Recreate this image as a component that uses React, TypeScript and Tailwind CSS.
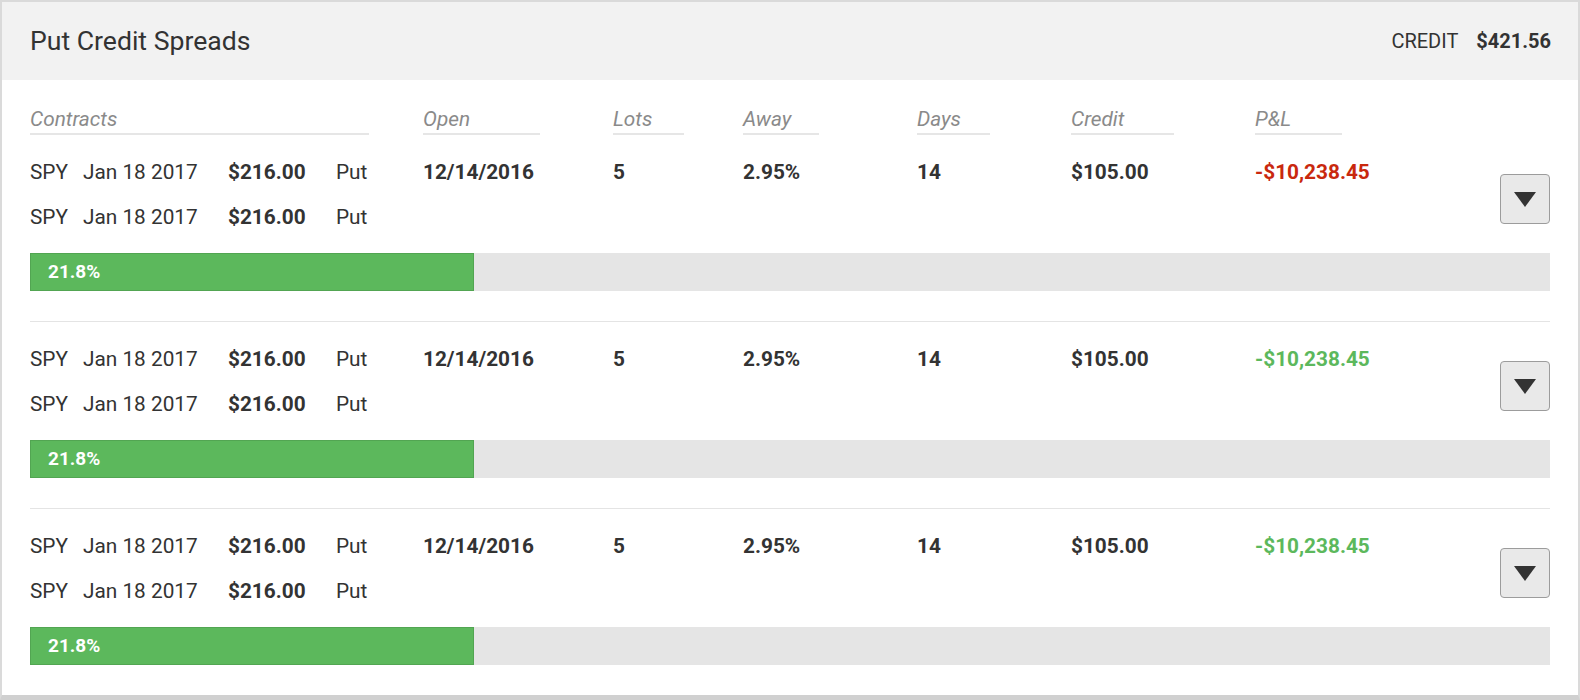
import React from "react";

type Spread = {
  symbol: string;
  expiry: string;
  strike: string;
  type: string;
  open: string;
  lots: string;
  away: string;
  days: string;
  credit: string;
  pnl: string;
  loss: boolean;
  progress: string;
  fill: number;
};

const spreads: Spread[] = [
  { symbol: "SPY", expiry: "Jan 18 2017", strike: "$216.00", type: "Put", open: "12/14/2016", lots: "5", away: "2.95%", days: "14", credit: "$105.00", pnl: "-$10,238.45", loss: true, progress: "21.8%", fill: 29.2 },
  { symbol: "SPY", expiry: "Jan 18 2017", strike: "$216.00", type: "Put", open: "12/14/2016", lots: "5", away: "2.95%", days: "14", credit: "$105.00", pnl: "-$10,238.45", loss: false, progress: "21.8%", fill: 29.2 },
  { symbol: "SPY", expiry: "Jan 18 2017", strike: "$216.00", type: "Put", open: "12/14/2016", lots: "5", away: "2.95%", days: "14", credit: "$105.00", pnl: "-$10,238.45", loss: false, progress: "21.8%", fill: 29.2 },
];

// column header labels with the width of their underline
const columns = [
  { label: "Contracts", line: "w-[339px]" },
  { label: "Open", line: "w-[117px]" },
  { label: "Lots", line: "w-[71px]" },
  { label: "Away", line: "w-[76px]" },
  { label: "Days", line: "w-[73px]" },
  { label: "Credit", line: "w-[103px]" },
  { label: "P&L", line: "w-[87px]" },
];

const gridCols = "grid grid-cols-[393px_190px_130px_174px_154px_184px_1fr]";

function ContractLine({ s }: { s: Spread }) {
  return (
    <div className="grid grid-cols-[53px_145px_108px_1fr] h-[45px] items-center">
      <span>{s.symbol}</span>
      <span>{s.expiry}</span>
      <span className="font-bold">{s.strike}</span>
      <span>{s.type}</span>
    </div>
  );
}

function Cell({ children, className = "" }: { children: React.ReactNode; className?: string }) {
  return <div className={`h-[45px] flex items-center font-bold ${className}`}>{children}</div>;
}

function SpreadRow({ s, last }: { s: Spread; last: boolean }) {
  return (
    <div className={`pt-[15px] pb-[30px] ${last ? "" : "border-b border-[#e4e4e4]"}`}>
      <div className="flex items-start">
        <div className={`${gridCols} flex-1`}>
          <div>
            <ContractLine s={s} />
            <ContractLine s={s} />
          </div>
          <Cell>{s.open}</Cell>
          <Cell>{s.lots}</Cell>
          <Cell>{s.away}</Cell>
          <Cell>{s.days}</Cell>
          <Cell>{s.credit}</Cell>
          <Cell className={s.loss ? "text-[#c9280e]" : "text-[#5cb85c]"}>{s.pnl}</Cell>
        </div>
        <button className="mt-[24px] w-[50px] h-[50px] flex items-center justify-center bg-[#e9e9e9] border-[1.5px] border-[#9c9c9c] rounded-[4px]">
          <svg width="22" height="15" viewBox="0 0 22 15">
            <path d="M0 0 H22 L11 15 Z" fill="#333" />
          </svg>
        </button>
      </div>
      <div className="mt-[13px] h-[38px] bg-[#e5e5e5] flex">
        <div
          className="h-full bg-[#5cb85c] shadow-[inset_0_0_0_1px_rgba(0,0,0,0.1)] flex items-center pl-[18px] text-white font-bold text-[19px]"
          style={{ width: `${s.fill}%` }}
        >
          {s.progress}
        </div>
      </div>
    </div>
  );
}

export default function App() {
  return (
    <div className="w-[1580px] h-[700px] bg-white font-['Roboto',sans-serif] text-[#333] border-x-2 border-t-2 border-b-[5px] border-[#dadada] border-b-[#d0d0d0] flex flex-col">
      {/* Header */}
      <div className="h-[79px] bg-[#f2f2f2] flex items-center justify-between pl-[28px] pr-[27px]">
        <h2 className="text-[26.6px] font-normal">Put Credit Spreads</h2>
        <div className="flex items-center gap-[18px] text-[20px]">
          <span>CREDIT</span>
          <span className="font-bold">$421.56</span>
        </div>
      </div>

      {/* Table */}
      <div className="px-[28px] pt-[25px] text-[20.8px]">
        <div className={`${gridCols} mr-[50px]`}>
          {columns.map((c) => (
            <div key={c.label}>
              <div className={`${c.line} h-[28px] leading-[28px] italic text-[#8a8a8a] border-b-2 border-[#e6e6e6] box-content`}>
                {c.label}
              </div>
            </div>
          ))}
        </div>
        {spreads.map((s, i) => (
          <SpreadRow key={i} s={s} last={i === spreads.length - 1} />
        ))}
      </div>
    </div>
  );
}
